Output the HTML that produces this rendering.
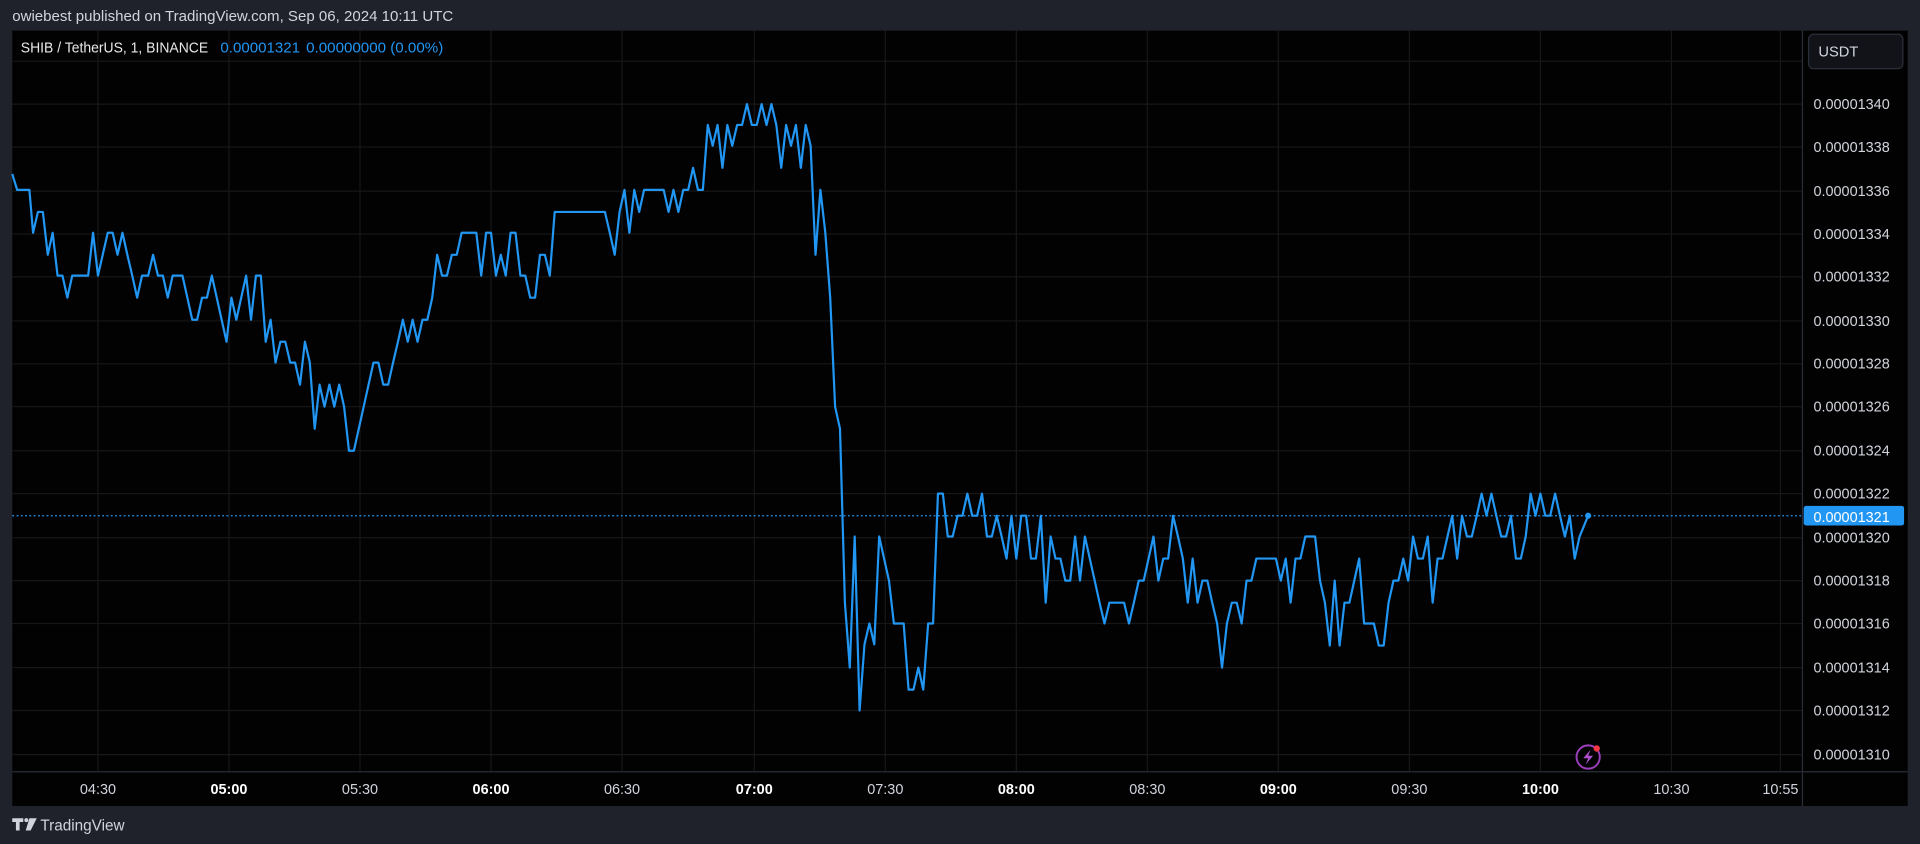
<!DOCTYPE html>
<html><head><meta charset="utf-8"><style>
html,body{margin:0;padding:0;background:#1f222b;overflow:hidden}
svg{display:block}
text{font-family:"Liberation Sans",sans-serif}
</style></head><body>
<svg width="1920" height="844" viewBox="0 0 1568 689" preserveAspectRatio="none" xmlns="http://www.w3.org/2000/svg">
<rect x="0" y="0" width="1568" height="689" fill="#1f222b"/>
<text x="10" y="17" font-size="12.3" fill="#d1d4dc">owiebest published on TradingView.com, Sep 06, 2024 10:11 UTC</text>
<rect x="10" y="25" width="1548" height="633" fill="#020202"/>
<g stroke="#171717" stroke-width="1">
<line x1="80" y1="25" x2="80" y2="630"/><line x1="187" y1="25" x2="187" y2="630"/><line x1="294" y1="25" x2="294" y2="630"/><line x1="401" y1="25" x2="401" y2="630"/><line x1="508" y1="25" x2="508" y2="630"/><line x1="616" y1="25" x2="616" y2="630"/><line x1="723" y1="25" x2="723" y2="630"/><line x1="830" y1="25" x2="830" y2="630"/><line x1="937" y1="25" x2="937" y2="630"/><line x1="1044" y1="25" x2="1044" y2="630"/><line x1="1151" y1="25" x2="1151" y2="630"/><line x1="1258" y1="25" x2="1258" y2="630"/><line x1="1365" y1="25" x2="1365" y2="630"/><line x1="1454" y1="25" x2="1454" y2="630"/>
<line x1="10" y1="50" x2="1472" y2="50"/><line x1="10" y1="85" x2="1472" y2="85"/><line x1="10" y1="120" x2="1472" y2="120"/><line x1="10" y1="156" x2="1472" y2="156"/><line x1="10" y1="191" x2="1472" y2="191"/><line x1="10" y1="226" x2="1472" y2="226"/><line x1="10" y1="262" x2="1472" y2="262"/><line x1="10" y1="297" x2="1472" y2="297"/><line x1="10" y1="332" x2="1472" y2="332"/><line x1="10" y1="368" x2="1472" y2="368"/><line x1="10" y1="403" x2="1472" y2="403"/><line x1="10" y1="439" x2="1472" y2="439"/><line x1="10" y1="474" x2="1472" y2="474"/><line x1="10" y1="509" x2="1472" y2="509"/><line x1="10" y1="545" x2="1472" y2="545"/><line x1="10" y1="580" x2="1472" y2="580"/><line x1="10" y1="616" x2="1472" y2="616"/>
</g>
<line x1="10" y1="630" x2="1558" y2="630" stroke="#2a2e39"/>
<line x1="1472" y1="25" x2="1472" y2="658" stroke="#2a2e39"/>
<line x1="10" y1="421" x2="1472" y2="421" stroke="#2196f3" stroke-width="1" stroke-dasharray="1.5 2"/>
<polyline fill="none" stroke="#2196f3" stroke-width="1.8" stroke-linejoin="round" points="10,142 14,155 24,155 27,190 31,173 35,173 39,208 43,190 47,225 51,225 55,243 59,225 72,225 76,190 80,225 88,190 92,190 96,208 100,190 104,208 108,225 112,243 116,225 121,225 125,208 129,225 133,225 137,243 141,225 149,225 153,243 157,261 161,261 165,243 169,243 173,225 177,243 181,261 185,279 189,243 193,261 197,243 201,225 205,261 209,225 213,225 217,279 221,261 225,296 229,279 233,279 237,296 241,296 245,314 249,279 253,296 257,350 261,314 265,332 269,314 273,332 277,314 281,332 285,368 289,368 293,350 297,332 301,314 305,296 309,296 313,314 317,314 321,296 325,279 329,261 333,279 337,261 341,279 345,261 349,261 353,243 357,208 361,225 365,225 369,208 373,208 377,190 389,190 393,225 397,190 401,190 405,225 409,208 413,225 417,190 421,190 425,225 429,225 433,243 437,243 441,208 445,208 449,225 453,173 494,173 498,190 502,208 506,173 510,155 514,190 518,155 522,173 526,155 542,155 546,173 550,155 554,173 558,155 562,155 566,137 570,155 574,155 578,102 582,119 586,102 590,137 594,102 598,119 602,102 606,102 610,85 614,102 618,102 622,85 626,102 630,85 634,102 638,137 642,102 646,119 650,102 654,137 658,102 662,119 666,208 670,155 674,190 678,243 682,332 686,350 690,492 694,545 698,438 702,580 706,526 710,509 714,526 718,438 722,456 726,474 730,509 738,509 742,563 746,563 750,545 754,563 758,509 762,509 766,403 770,403 774,438 778,438 782,421 786,421 790,403 794,421 798,421 802,403 806,438 810,438 814,421 818,438 822,456 826,421 830,456 834,421 838,421 842,456 846,456 850,421 854,492 858,438 862,456 866,456 870,474 874,474 878,438 882,474 886,438 890,456 894,474 898,492 902,509 906,492 918,492 922,509 926,492 930,474 934,474 938,456 942,438 946,474 950,456 954,456 958,421 962,438 966,456 970,492 974,456 978,492 982,474 986,474 990,492 994,509 998,545 1002,509 1006,492 1010,492 1014,509 1018,474 1022,474 1026,456 1042,456 1046,474 1050,456 1054,492 1058,456 1062,456 1066,438 1074,438 1078,474 1082,492 1086,527 1090,474 1094,527 1098,492 1102,492 1106,474 1110,456 1114,509 1122,509 1126,527 1130,527 1134,492 1138,474 1142,474 1146,456 1150,474 1154,438 1158,456 1162,456 1166,438 1170,492 1174,456 1178,456 1186,421 1190,456 1194,421 1198,438 1202,438 1206,421 1210,403 1214,421 1218,403 1222,421 1226,438 1230,438 1234,421 1238,456 1242,456 1246,438 1250,403 1254,421 1258,403 1262,421 1266,421 1270,403 1274,421 1278,438 1282,421 1286,456 1290,438 1297,421"/>
<circle cx="1297" cy="421" r="2.5" fill="#2196f3"/>
<text x="17" y="43" font-size="12.3" fill="#e8e8e8" textLength="153" lengthAdjust="spacingAndGlyphs">SHIB / TetherUS, 1, BINANCE</text>
<text x="180" y="43" font-size="12.3" fill="#2196f3" textLength="65" lengthAdjust="spacingAndGlyphs">0.00001321</text>
<text x="250" y="43" font-size="12.3" fill="#2196f3" textLength="112" lengthAdjust="spacingAndGlyphs">0.00000000 (0.00%)</text>
<rect x="1477" y="28" width="77" height="28" rx="4" fill="#111318" stroke="#2a2e39"/>
<text x="1485" y="46" font-size="12" fill="#d1d4dc">USDT</text>
<g font-size="11.8" fill="#d1d4dc">
<text x="1481" y="89">0.00001340</text><text x="1481" y="124">0.00001338</text><text x="1481" y="160">0.00001336</text><text x="1481" y="195">0.00001334</text><text x="1481" y="230">0.00001332</text><text x="1481" y="266">0.00001330</text><text x="1481" y="301">0.00001328</text><text x="1481" y="336">0.00001326</text><text x="1481" y="372">0.00001324</text><text x="1481" y="407">0.00001322</text><text x="1481" y="443">0.00001320</text><text x="1481" y="478">0.00001318</text><text x="1481" y="513">0.00001316</text><text x="1481" y="549">0.00001314</text><text x="1481" y="584">0.00001312</text><text x="1481" y="620">0.00001310</text>
</g>
<rect x="1473" y="413" width="82" height="16" rx="2" fill="#2196f3"/>
<text x="1481" y="426" font-size="11.8" fill="#ffffff">0.00001321</text>
<g font-size="11.8" fill="#d1d4dc" text-anchor="middle">
<text x="80" y="648">04:30</text><text x="187" y="648" font-weight="bold" fill="#fff">05:00</text><text x="294" y="648">05:30</text><text x="401" y="648" font-weight="bold" fill="#fff">06:00</text><text x="508" y="648">06:30</text><text x="616" y="648" font-weight="bold" fill="#fff">07:00</text><text x="723" y="648">07:30</text><text x="830" y="648" font-weight="bold" fill="#fff">08:00</text><text x="937" y="648">08:30</text><text x="1044" y="648" font-weight="bold" fill="#fff">09:00</text><text x="1151" y="648">09:30</text><text x="1258" y="648" font-weight="bold" fill="#fff">10:00</text><text x="1365" y="648">10:30</text><text x="1454" y="648">10:55</text>
</g>
<circle cx="1297" cy="618" r="9.5" fill="#020202" stroke="#9c3fbf" stroke-width="1.6"/>
<path d="M1299 612 L1293 619 L1297 619 L1295 624 L1301 617 L1297 617 Z" fill="#b04fd0"/>
<circle cx="1304" cy="611" r="2.6" fill="#f23645"/>
<path d="M10 668 h9 v3 h-3 v7 h-3 v-7 h-3 Z" fill="#d1d4dc"/>
<circle cx="21.5" cy="669.5" r="1.6" fill="#d1d4dc"/>
<path d="M24 668 h6 l-5 10 h-4 Z" fill="#d1d4dc"/>
<text x="33" y="678" font-size="12.5" fill="#d1d4dc">TradingView</text>
</svg>
</body></html>
